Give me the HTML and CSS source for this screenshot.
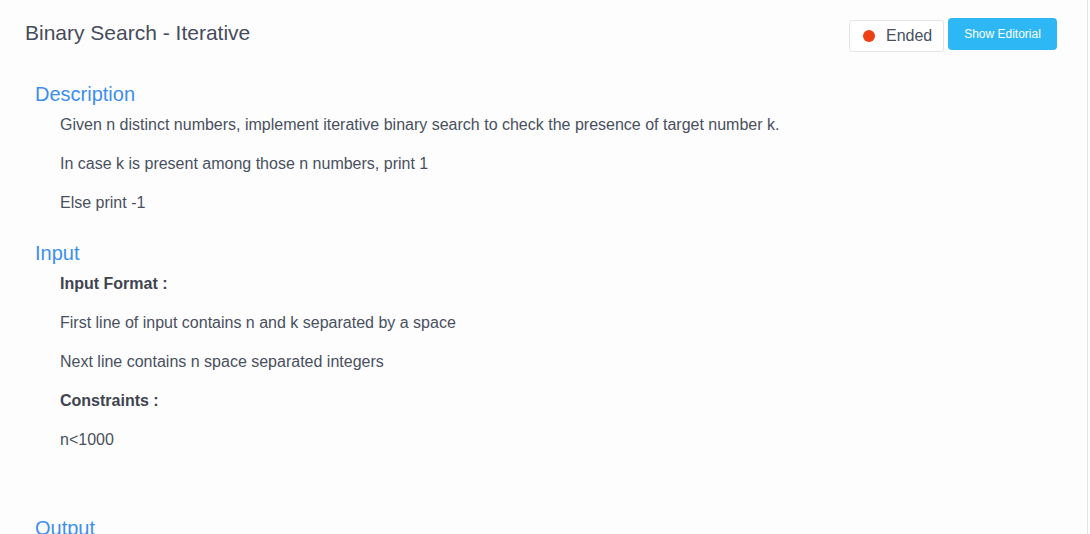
FILE: index.html
```html
<!DOCTYPE html>
<html>
<head>
<meta charset="utf-8">
<link rel="stylesheet" href="styles.css">
</head>
<body>
<div class="page">
  <div class="header">
    <h1 class="title">Binary Search - Iterative</h1>
    <div class="actions">
      <div class="status"><span class="dot"></span><span class="status-text">Ended</span></div>
      <button class="btn-info">Show Editorial</button>
    </div>
  </div>
  <div class="section section-first">
    <h2 class="sec-title">Description</h2>
    <div class="sec-body">
      <p>Given n distinct numbers, implement iterative binary search to check the presence of target number k.</p>
      <p>In case k is present among those n numbers, print 1</p>
      <p>Else print -1</p>
    </div>
  </div>
  <div class="section">
    <h2 class="sec-title">Input</h2>
    <div class="sec-body">
      <p><strong>Input Format :</strong></p>
      <p>First line of input contains n and k separated by a space</p>
      <p>Next line contains n space separated integers</p>
      <p><strong>Constraints :</strong></p>
      <p>n&lt;1000</p>
      <p class="blank"></p>
    </div>
  </div>
  <div class="section">
    <h2 class="sec-title">Output</h2>
    <div class="sec-body">
      <p>Print 1 if k is present, else print -1</p>
    </div>
  </div>
</div>
</body>
</html>
```
FILE: styles.css
```css
html, body {
  margin: 0;
  padding: 0;
  background: #ffffff;
}
body {
  font-family: "Liberation Sans", Arial, sans-serif;
  color: #495060;
  overflow: hidden;
  height: 534px;
}
.page {
  width: 1088px;
  height: 534px;
  overflow: hidden;
  background: #fdfdfd;
  border-right: 1px solid #e4e4e4;
  box-sizing: border-box;
}
.header {
  display: flex;
  justify-content: space-between;
  align-items: flex-start;
  padding: 18px 30px 0 25px;
  height: 63px;
  box-sizing: border-box;
}
.title {
  margin: 2px 0 0 0;
  font-size: 21px;
  line-height: 26px;
  font-weight: normal;
  color: #464c5b;
}
.actions {
  display: flex;
  align-items: flex-start;
  gap: 4px;
}
.status {
  margin-top: 2px;
  height: 32px;
  width: 95px;
  box-sizing: border-box;
  border: 1px solid #e3e5e8;
  border-radius: 3px;
  background: #fff;
  display: flex;
  align-items: center;
  padding-left: 13px;
}
.dot {
  width: 12px;
  height: 12px;
  border-radius: 50%;
  background: #ed3f14;
  margin-right: 11px;
}
.status-text {
  font-size: 16px;
  color: #495060;
}
.btn-info {
  height: 32px;
  width: 109px;
  border: none;
  border-radius: 4px;
  background: #2db7f5;
  color: #fff;
  font-family: "Liberation Sans", Arial, sans-serif;
  font-size: 12px;
  padding: 0;
}
.section {
  padding-left: 35px;
  margin-top: 26px;
}
.section.section-first {
  margin-top: 18px;
}
.sec-title {
  margin: 0;
  font-size: 20px;
  line-height: 26px;
  font-weight: normal;
  color: #3d8eef;
}
.sec-body {
  padding-left: 25px;
  padding-top: 7px;
}
.sec-body p {
  margin: 0 0 17px 0;
  font-size: 16px;
  line-height: 22px;
}
.sec-body p.blank {
  height: 21px;
  margin: 0;
}
.sec-body strong {
  font-weight: bold;
  color: #3f4450;
}
```
